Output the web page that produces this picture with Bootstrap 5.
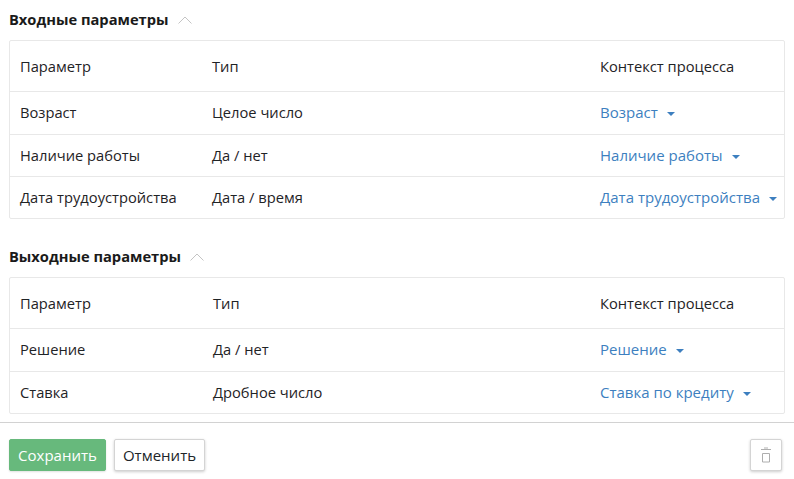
<!DOCTYPE html>
<html lang="ru">
<head>
<meta charset="utf-8">
<title>Параметры</title>
<link href="https://cdn.jsdelivr.net/npm/bootstrap@5.3.0/dist/css/bootstrap.min.css" rel="stylesheet">
<style>
html, body { height: 479px; overflow: hidden; }
body { font-family: "Open Sans", sans-serif; font-size: 14.7px; color: #212529; background: #fff; }
.page-body { padding: 0 9px; height: 422px; }
.section-title { height: 40px; gap: 9px; }
.section-title h2 { font-size: 14.7px; font-weight: 700; margin: 0; color: #1a1a1a; }
.section-gap { margin-top: 18px; }
.param-wrap { border: 1px solid #e8e8e8; border-radius: 2px; width: 776px; }
.param-table { table-layout: fixed; width: 100%; margin: 0; border-collapse: separate; border-spacing: 0; }
.param-table td, .param-table th { padding: 0 0 0 10px; font-weight: 400; vertical-align: middle; border-bottom: 1px solid #e8e8e8; height: 42px; color: #1f2326; }
.param-table tbody tr:first-child td { height: 43px; padding-bottom: 2px; }
.param-table tbody tr:last-child td { border-bottom: 0; height: 41px; }
.param-table thead th { height: 51px; }
.param-table td .param-link { color: #3d7fbf; font-size: 15px; text-decoration: none; }
.param-caret { display: inline-block; margin-left: 9px; vertical-align: middle; border-top: 4px solid #3d7fbf; border-left: 4px solid transparent; border-right: 4px solid transparent; }
.col-one { width: 192px; }
.col-one-b { width: 193px; }
.col-three { width: 194px; }
.action-bar { border-top: 1px solid #d2d2d2; padding: 16px 12px 0 9px; }
.btn-save { background: #67b97c; border: 1px solid #67b97c; color: #fff; font-size: 15px; width: 97px; height: 32px; padding: 0; border-radius: 2px; box-shadow: 0 1px 2px rgba(0,0,0,.12); }
.btn-cancel { background: #fff; border: 1px solid #d4d4d4; color: #212529; font-size: 15px; width: 91px; height: 32px; padding: 0; border-radius: 2px; box-shadow: 0 1px 3px rgba(0,0,0,.2); }
.btn-trash { background: #fff; border: 1px solid #d4d4d4; width: 32px; height: 32px; padding: 0; border-radius: 2px; box-shadow: 0 1px 3px rgba(0,0,0,.2); }
</style>
</head>
<body>
<div class="page-body">
  <div class="section-title d-flex align-items-center">
    <h2>Входные параметры</h2>
    <svg width="14" height="8" viewBox="0 0 14 8" fill="none" stroke="#c4c4c4" stroke-width="1"><path d="M0.5 7.5 7 1l6.5 6.5"/></svg>
  </div>
  <div class="param-wrap">
    <table class="param-table">
      <colgroup><col class="col-one"><col><col class="col-three"></colgroup>
      <thead><tr><th>Параметр</th><th>Тип</th><th>Контекст процесса</th></tr></thead>
      <tbody>
        <tr><td>Возраст</td><td>Целое число</td><td><a class="param-link" href="#">Возраст<span class="param-caret"></span></a></td></tr>
        <tr><td>Наличие работы</td><td>Да / нет</td><td><a class="param-link" href="#">Наличие работы<span class="param-caret"></span></a></td></tr>
        <tr><td>Дата трудоустройства</td><td>Дата / время</td><td><a class="param-link" href="#">Дата трудоустройства<span class="param-caret"></span></a></td></tr>
      </tbody>
    </table>
  </div>
  <div class="section-title section-gap d-flex align-items-center">
    <h2>Выходные параметры</h2>
    <svg width="14" height="8" viewBox="0 0 14 8" fill="none" stroke="#c4c4c4" stroke-width="1"><path d="M0.5 7.5 7 1l6.5 6.5"/></svg>
  </div>
  <div class="param-wrap">
    <table class="param-table">
      <colgroup><col class="col-one-b"><col><col class="col-three"></colgroup>
      <thead><tr><th>Параметр</th><th>Тип</th><th>Контекст процесса</th></tr></thead>
      <tbody>
        <tr><td>Решение</td><td>Да / нет</td><td><a class="param-link" href="#">Решение<span class="param-caret"></span></a></td></tr>
        <tr><td>Ставка</td><td>Дробное число</td><td><a class="param-link" href="#">Ставка по кредиту<span class="param-caret"></span></a></td></tr>
      </tbody>
    </table>
  </div>
</div>
<div class="action-bar d-flex align-items-center">
  <button type="button" class="btn btn-save">Сохранить</button>
  <button type="button" class="btn btn-cancel ms-2">Отменить</button>
  <button type="button" class="btn btn-trash ms-auto d-flex align-items-center justify-content-center" aria-label="Удалить">
    <svg width="12" height="16" viewBox="0 0 12 16" fill="none" stroke="#aeaeae"><path d="M1 2.5h10" stroke-width="1"/><path d="M4 1h4" stroke-width="1.4" stroke="#c8c8c8"/><path d="M2.5 6.5h7v8.5h-7z" stroke-width="1"/></svg>
  </button>
</div>
<script src="https://cdn.jsdelivr.net/npm/bootstrap@5.3.0/dist/js/bootstrap.bundle.min.js"></script>
</body>
</html>
